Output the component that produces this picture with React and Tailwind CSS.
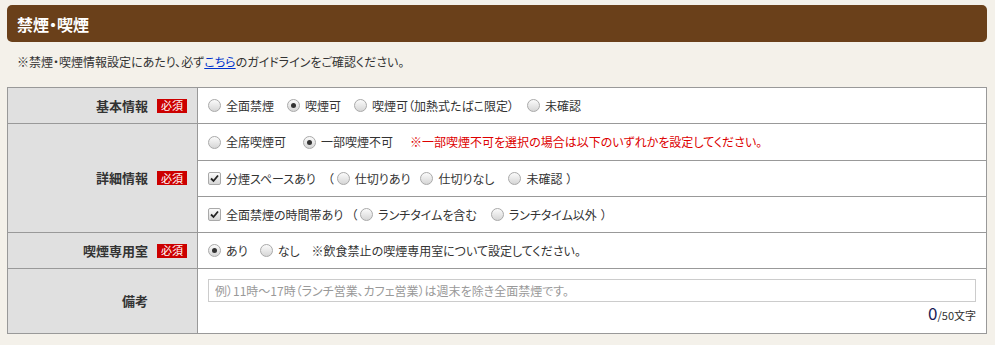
import React from "react";

const font = { fontFamily: '"Noto Sans CJK JP", "Noto Sans", sans-serif' };

function Radio({ checked }) {
  return (
    <span className="relative inline-flex w-[13px] h-[13px] shrink-0 rounded-full border border-[#a9a9a9] bg-linear-to-b from-[#fbfbfb] to-[#d6d6d6] items-center justify-center">
      {checked && <span className="w-[5px] h-[5px] rounded-full bg-[#333]" />}
    </span>
  );
}

function Check() {
  return (
    <span className="inline-flex w-[13px] h-[13px] shrink-0 rounded-[2px] border border-[#a9a9a9] bg-linear-to-b from-[#fbfbfb] to-[#d6d6d6] items-center justify-center">
      <svg width="9" height="9" viewBox="0 0 9 9">
        <path d="M1 4.5 L3.5 7 L8 1.5" stroke="#222" strokeWidth="1.8" fill="none" />
      </svg>
    </span>
  );
}

function Opt({ checked, box, label, className = "" }) {
  return (
    <span className={`inline-flex items-center gap-[5px] ${className}`}>
      {box ? <Check /> : <Radio checked={checked} />}
      <span>{label}</span>
    </span>
  );
}

function Badge() {
  return (
    <span className="inline-flex items-center justify-center w-[30px] h-[14px] bg-[#cc0000] text-white text-[11px] leading-none ml-[9px]">
      必須
    </span>
  );
}

function Label({ text, badge = true }) {
  return (
    <div className="w-[190px] shrink-0 bg-[#e0e0e0] border-r border-[#999] flex items-center justify-end pr-[10px]">
      <span className="text-[13px] font-bold text-[#333]">{text}</span>
      {badge ? <Badge /> : <span className="w-[30px] ml-[9px]" />}
    </div>
  );
}

export default function App() {
  return (
    <div style={font} className="w-[995px] h-[345px] bg-[#f4f1ea] pt-[5px] pl-[7px] text-[#333] [font-feature-settings:'palt']">
      <div className="w-[980px] h-[37px] rounded-[5px] bg-[#6a401a] flex items-center pl-[10px]">
        <h1 className="text-white text-[16px] font-bold">禁煙・喫煙</h1>
      </div>
      <p className="text-[12px] pl-[10px] mt-[12px] h-[16px] leading-[16px]">
        ※禁煙・喫煙情報設定にあたり、必ず<span className="text-[#0033cc] underline">こちら</span>のガイドラインをご確認ください。
      </p>
      <div className="w-[980px] mt-[17px] border border-[#999] bg-white text-[12px]">
        <div className="flex h-[36px] border-b border-[#999]">
          <Label text="基本情報" />
          <div className="flex items-center pl-[10px]">
            <Opt label="全面禁煙" />
            <Opt checked label="喫煙可" className="ml-[13px]" />
            <Opt label="喫煙可（加熱式たばこ限定）" className="ml-[13px]" />
            <Opt label="未確認" className="ml-[13px]" />
          </div>
        </div>
        <div className="flex border-b border-[#999]">
          <Label text="詳細情報" />
          <div className="flex-1 flex flex-col">
            <div className="flex items-center h-[37px] pl-[10px] border-b border-[#999]">
              <Opt label="全席喫煙可" />
              <Opt checked label="一部喫煙不可" className="ml-[17px]" />
              <span className="ml-[17px] text-[#dd0000]">※一部喫煙不可を選択の場合は以下のいずれかを設定してください。</span>
            </div>
            <div className="flex items-center h-[36px] pl-[10px] border-b border-[#999]">
              <Opt box label="分煙スペースあり" />
              <span className="ml-[12px] mr-[3px]">（</span>
              <Opt label="仕切りあり" />
              <Opt label="仕切りなし" className="ml-[10px]" />
              <Opt label="未確認" className="ml-[14px]" />
              <span className="ml-[4px]">）</span>
            </div>
            <div className="flex items-center h-[35px] pl-[10px]">
              <Opt box label="全面禁煙の時間帯あり" />
              <span className="ml-[8px] mr-[3px]">（</span>
              <Opt label="ランチタイムを含む" />
              <Opt label="ランチタイム以外" className="ml-[14px]" />
              <span className="ml-[4px]">）</span>
            </div>
          </div>
        </div>
        <div className="flex h-[36px] border-b border-[#999]">
          <Label text="喫煙専用室" />
          <div className="flex items-center pl-[10px]">
            <Opt checked label="あり" />
            <Opt label="なし" className="ml-[12px]" />
            <span className="ml-[12px]">※飲食禁止の喫煙専用室について設定してください。</span>
          </div>
        </div>
        <div className="flex h-[64px]">
          <Label text="備考" badge={false} />
          <div className="flex-1 flex flex-col pl-[10px] pr-[10px] pt-[10px]">
            <input
              type="text"
              placeholder="例）11時～17時（ランチ営業、カフェ営業）は週末を除き全面禁煙です。"
              className="w-full h-[23px] border border-[#ccc] px-[6px] text-[12px] placeholder:text-[#999] outline-none"
            />
            <div className="flex justify-end items-baseline mt-[2px]">
              <span className="text-[17px] text-[#1a1a55] leading-none">0</span>
              <span className="text-[11px] leading-none">/50文字</span>
            </div>
          </div>
        </div>
      </div>
    </div>
  );
}
